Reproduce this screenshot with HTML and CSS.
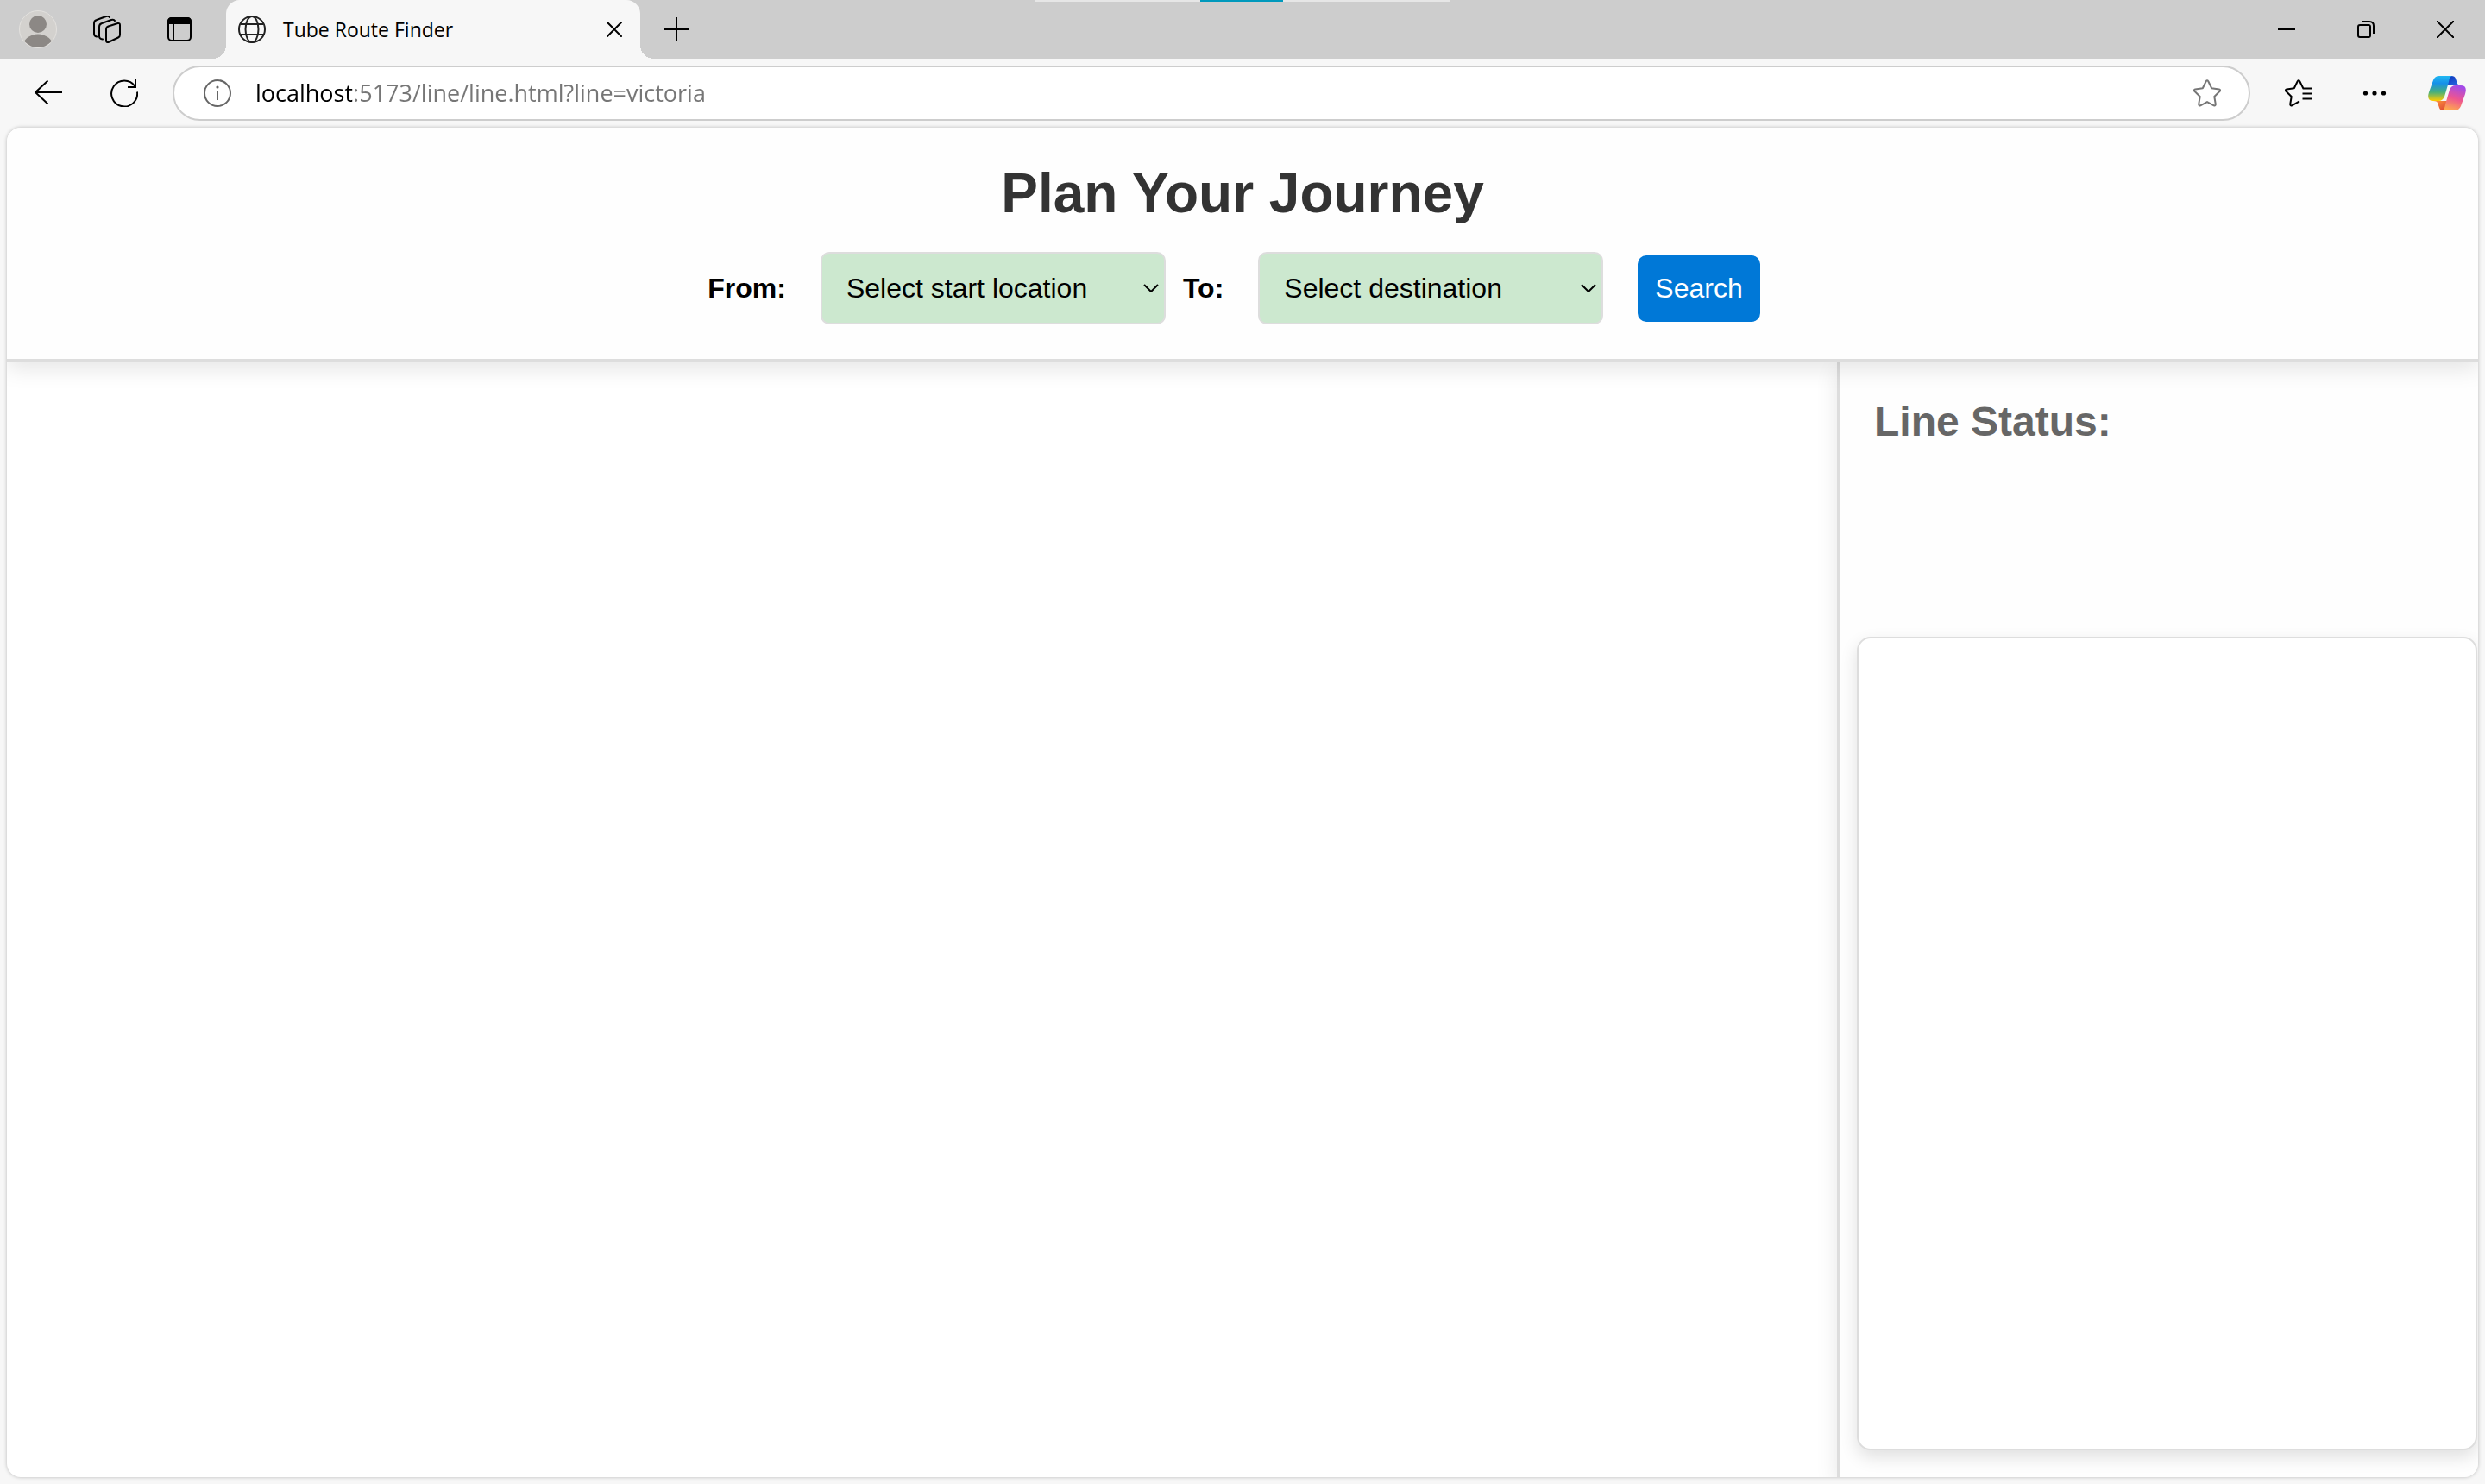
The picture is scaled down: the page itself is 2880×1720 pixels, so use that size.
FILE: index.html
```html
<!DOCTYPE html>
<html lang="en">
<head>
<meta charset="utf-8">
<title>Tube Route Finder</title>
<link rel="stylesheet" href="styles.css">
</head>
<body>
<div class="browser">
  <div class="tab-strip">
    <button class="strip-button profile" aria-label="Profile">
      <svg width="44" height="44" viewBox="0 0 44 44"><defs><clipPath id="face"><circle cx="22" cy="22" r="21"/></clipPath></defs><circle cx="22" cy="22" r="21.5" fill="#d3d1ce" stroke="#e3e1de"/><g clip-path="url(#face)" fill="#8c8885"><circle cx="22" cy="16" r="10"/><ellipse cx="22" cy="43" rx="18" ry="15.5"/></g></svg>
    </button>
    <button class="strip-button" aria-label="Workspaces">
      <svg width="32" height="32" viewBox="0 0 32 32" fill="none" stroke="#000" stroke-width="2" stroke-linecap="round" stroke-linejoin="round"><path d="M17.5 12.5 28.5 9q2.500-.5 2.500 2v11.500q0 2-2 3L17.500 31q-2.500.5-2.500-2V16q0-2.500 2.500-3.500Z"/><path d="M11 27.500q-4-.5-4-3.500V13q0-3 3-4l11-4q3-1 4 1"/><path d="M4 24.500q-3-.5-3-3.500V9q0-3 3-4l11-4q3-1 4 1"/></svg>
    </button>
    <button class="strip-button" aria-label="Tab actions">
      <svg width="28" height="28" viewBox="0 0 28 28"><rect x="1" y="1" width="26" height="26" rx="4" fill="none" stroke="#000" stroke-width="2"/><path d="M0 8V5q0-5 5-5h18q5 0 5 5v3Z"/><path d="M7 8v19" stroke="#000" stroke-width="2"/></svg>
    </button>
    <div class="tab">
      <svg width="32" height="32" viewBox="0 0 32 32" fill="none" stroke="#222" stroke-width="2"><circle cx="16" cy="16" r="15"/><ellipse cx="16" cy="16" rx="7.500" ry="15"/><path d="M3 10h26M3 22h26"/></svg>
      <span class="tab-title">Tube Route Finder</span>
      <button class="tab-close" aria-label="Close tab"><svg width="18" height="18" viewBox="0 0 18 18" fill="none" stroke="#000" stroke-width="2" stroke-linecap="round"><path d="m1 1 16 16M17 1 1 17"/></svg></button>
    </div>
    <button class="strip-button" aria-label="New tab"><svg width="28" height="28" viewBox="0 0 28 28" stroke="#000" stroke-width="2"><path d="M0 14h28M14 0v28"/></svg></button>
    <div class="window-controls">
      <button aria-label="Minimize"><svg width="20" height="20" viewBox="0 0 20 20" stroke="#000" stroke-width="2"><path d="M0 10h20"/></svg></button>
      <button aria-label="Restore"><svg width="20" height="20" viewBox="0 0 20 20" fill="none" stroke="#000" stroke-width="2"><rect x="1" y="5" width="14" height="14" rx="2"/><path d="M5 1h9q5 0 5 5v9"/></svg></button>
      <button aria-label="Close"><svg width="20" height="20" viewBox="0 0 20 20" stroke="#000" stroke-width="2"><path d="m0 0 20 20M20 0 0 20"/></svg></button>
    </div>
    <div class="top-bar"></div>
  </div>

  <div class="toolbar">
    <button aria-label="Back"><svg width="32" height="32" viewBox="0 0 32 32" fill="none" stroke="#000" stroke-width="2" stroke-linejoin="round"><path d="M32 15H1M15.500 1.500 1 15l14.500 13.500"/></svg></button>
    <button aria-label="Refresh"><svg width="32" height="32" viewBox="0 0 32 32" fill="none" stroke="#000" stroke-width="2"><path d="M31 14.500A15 15 0 1 1 28.500 8M29 0v9h-9"/></svg></button>
    <div class="address">
      <svg width="32" height="32" viewBox="0 0 32 32" fill="none" stroke="#666" stroke-width="2"><circle cx="16" cy="16" r="15"/><path d="M16 13v11"/><circle cx="16" cy="9" r="1.600" fill="#666" stroke="none"/></svg>
      <input type="text" aria-label="Address" value="localhost:5173/line/line.html?line=victoria">
      <button aria-label="Add to favorites"><svg width="32" height="32" viewBox="0 0 32 32" fill="none" stroke="#767676" stroke-width="2" stroke-linejoin="round"><path d="M14.700 2.200q1.300-2 2.600 0l3.900 8 8.600 1.300q2.200.6.800 2.300l-6.300 6.200 1.500 8.800q0 2.200-2 1.500L16 26.100l-7.800 4.200q-2 .7-2-1.500L7.700 20 1.400 13.800q-1.400-1.700.8-2.300l8.600-1.300Z"/></svg></button>
    </div>
    <button aria-label="Favorites"><svg width="32" height="32" viewBox="0 0 32 32" fill="none" stroke="#000" stroke-width="2" stroke-linejoin="round"><path d="M32 10.500H21.400l-4.100-8.300q-1.300-2-2.600 0l-3.900 8-8.600 1.300q-2.200.6-.8 2.300L7.700 20l-1.500 8.800q0 2.200 2 1.500l8.800-5M20.500 16.500H32M20.500 22.500H32"/></svg></button>
    <button aria-label="Settings and more"><svg width="28" height="6" viewBox="0 0 28 6"><circle cx="3.500" cy="3" r="2.600"/><circle cx="14" cy="3" r="2.600"/><circle cx="24.500" cy="3" r="2.600"/></svg></button>
    <button class="copilot" aria-label="Copilot"><svg width="44" height="40" viewBox="0 0 44 40"><defs><linearGradient id="ca" x1="0" y1="0" x2="0" y2="1"><stop offset="0" stop-color="#20b8f2"/><stop offset=".3" stop-color="#1690e8"/><stop offset=".65" stop-color="#48b07a"/><stop offset="1" stop-color="#fc0"/></linearGradient><linearGradient id="cb" x1="0" y1="0" x2="1" y2="1"><stop offset="0" stop-color="#0b2fb5"/><stop offset="1" stop-color="#2a70e8"/></linearGradient><linearGradient id="cc" x1=".6" y1="0" x2=".3" y2="1"><stop offset="0" stop-color="#a34be8"/><stop offset=".5" stop-color="#ee5590"/><stop offset="1" stop-color="#ffae4a"/></linearGradient><linearGradient id="cd" x1="0" y1="0" x2="1" y2="1"><stop offset="0" stop-color="#ff9a3c"/><stop offset="1" stop-color="#d83b35"/></linearGradient></defs><path d="M20 11 23 3q1-3 4-3 4 0 5 3l2 6q1 2 4 2Z" fill="url(#cb)"/><path d="M24 29l-3 8q-1 3-4 3-3 0-4-3l-2-6q-1-2-5-2Z" fill="url(#cd)"/><path d="M28 0H13Q8 0 6 5L1 19q-3 10 5 10h6q5 0 7-5l5-17q1-7 4-7Z" fill="url(#ca)"/><path d="M16 40h15q5 0 7-5l5-14q3-10-5-10h-6q-5 0-7 5l-5 17q-1 7-4 7Z" fill="url(#cc)"/></svg></button>
  </div>

  <main class="page">
    <header class="planner">
      <h1>Plan Your Journey</h1>
      <form class="journey">
        <label for="from">From:</label>
        <span class="select-box"><select id="from"><option>Select start location</option></select><svg width="18" height="10" viewBox="0 0 18 10" fill="none" stroke="#000" stroke-width="2"><path d="m1 1 8 8 8-8"/></svg></span>
        <label for="to">To:</label>
        <span class="select-box"><select id="to"><option>Select destination</option></select><svg width="18" height="10" viewBox="0 0 18 10" fill="none" stroke="#000" stroke-width="2"><path d="m1 1 8 8 8-8"/></svg></span>
        <button type="button">Search</button>
      </form>
    </header>
    <div class="content">
      <section class="map" aria-label="Line map"></section>
      <aside class="sidebar">
        <h2>Line Status:</h2>
        <section class="card" aria-label="Status details"></section>
      </aside>
    </div>
  </main>
</div>
</body>
</html>
```
FILE: styles.css
```css
* { box-sizing: border-box; }

body {
  margin: 0;
  background: #f7f7f7;
  color: #000;
  font-family: "Liberation Sans", Arial, sans-serif;
}

button {
  margin: 0;
  padding: 0;
  border: 0;
  background: none;
  font: inherit;
}

svg { display: block; flex: none; }

.browser {
  display: flex;
  flex-direction: column;
  min-height: 100vh;
  padding-bottom: 8px;
}

/* Tab strip */
.tab-strip {
  position: relative;
  display: flex;
  height: 68px;
  background: #cdcdcd;
}

.tab-strip button,
.toolbar button {
  display: flex;
  align-items: center;
  justify-content: center;
}

.strip-button { width: 84px; }
.strip-button.profile { width: 88px; margin-right: -6px; }

.tab {
  position: relative;
  display: flex;
  align-items: center;
  width: 480px;
  margin-left: 12px;
  padding: 0 14px;
  border-radius: 16px 16px 0 0;
  background: #f7f7f7;
}

.tab::before,
.tab::after {
  content: "";
  position: absolute;
  bottom: 0;
  width: 16px;
  height: 16px;
}

.tab::before { left: -16px; background: radial-gradient(circle at 0 0, transparent 16px, #f7f7f7 16px); }
.tab::after { right: -16px; background: radial-gradient(circle at 100% 0, transparent 16px, #f7f7f7 16px); }

.tab-title {
  flex: 1;
  margin-left: 20px;
  font: 23px/32px "Open Sans", "Noto Sans", sans-serif;
}

.tab-close { width: 32px; height: 32px; }

.window-controls { display: flex; margin-left: auto; }
.window-controls button { width: 92px; }

.top-bar {
  position: absolute;
  top: 0;
  left: 50%;
  width: 482px;
  height: 2px;
  transform: translateX(-50%);
  background: linear-gradient(90deg, #e6e6e6 192px, #0099bc 192px 288px, #e6e6e6 288px);
}

/* Toolbar */
.toolbar {
  display: flex;
  align-items: center;
  height: 80px;
  padding: 0 4px 0 12px;
}

.toolbar button { width: 88px; height: 64px; }
.toolbar .copilot { width: 80px; }

.address {
  display: flex;
  flex: 1;
  align-items: center;
  height: 64px;
  margin: 0 12px;
  padding-left: 34px;
  border: 2px solid #cdcdcd;
  border-radius: 32px;
  background: #fff;
}

.address input {
  flex: 1;
  min-width: 0;
  height: 40px;
  margin-left: 28px;
  padding: 0;
  border: 0;
  outline: 0;
  background: linear-gradient(90deg, #000 112px, #767676 112px);
  -webkit-background-clip: text;
  background-clip: text;
  color: transparent;
  font: 27px/40px "Open Sans", "Noto Sans", sans-serif;
}

.toolbar .address button { width: 96px; }

/* Web page */
.page {
  display: flex;
  flex: 1;
  flex-direction: column;
  margin: 0 8px;
  overflow: hidden;
  border-radius: 16px;
  background: #fff;
  box-shadow: 0 0 4px rgba(0, 0, 0, 0.25);
}

.planner {
  position: relative;
  z-index: 1;
  padding: 40px 0;
  border-bottom: 4px solid #ddd;
  background: #fefefe;
  box-shadow: 0 8px 24px rgba(0, 0, 0, 0.1);
}

h1 {
  margin: 0 0 32px;
  color: #333;
  font-size: 64px;
  line-height: 72px;
  text-align: center;
}

.journey {
  display: flex;
  align-items: center;
  justify-content: center;
  font-size: 32px;
}

.journey label { font-weight: bold; }

.select-box {
  position: relative;
  margin: 0 20px 0 40px;
}

.select-box svg {
  position: absolute;
  top: 37px;
  right: 8px;
  pointer-events: none;
}

select {
  display: block;
  width: 400px;
  height: 84px;
  padding: 0 28px;
  appearance: none;
  border: 2px solid #ddd;
  border-radius: 10px;
  background: #cce8cf;
  color: #000;
  font: inherit;
}

.journey button {
  margin: 0 20px;
  padding: 20px;
  border-radius: 10px;
  background: #0078d7;
  color: #fff;
}

.content {
  display: flex;
  flex: 1;
}

.map { flex: 1; }

.sidebar {
  display: flex;
  flex-direction: column;
  width: 743px;
  padding: 40px 1px 31px 19px;
  border-left: 4px solid #ddd;
  background: #fefefe;
  box-shadow: 0 8px 24px rgba(0, 0, 0, 0.1);
}

h2 {
  margin: 0 0 220px 20px;
  color: #666;
  font-size: 48px;
  line-height: 58px;
}

.card {
  flex: 1;
  border: 2px solid #ddd;
  border-radius: 16px;
  background: #fff;
  box-shadow: 0 8px 20px rgba(0, 0, 0, 0.12);
}
```
